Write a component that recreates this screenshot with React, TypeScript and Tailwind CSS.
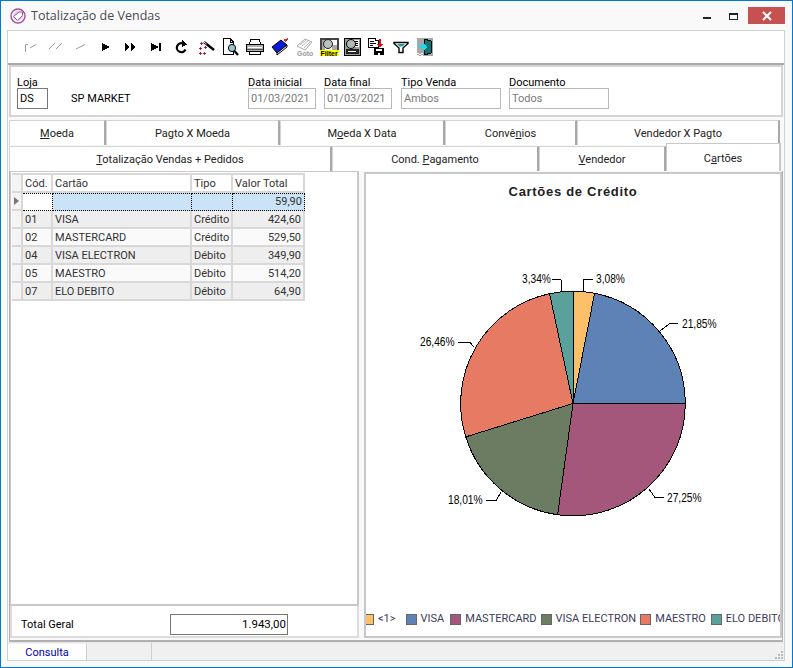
import React from "react";

const slices = [
  { v: 3.08, c: "#fdbf67" },
  { v: 21.85, c: "#5e82b6" },
  { v: 27.25, c: "#a5577b" },
  { v: 18.01, c: "#6c7c63" },
  { v: 26.46, c: "#e67a62" },
  { v: 3.34, c: "#5ba19b" },
];
const CX = 573, CY = 403.5, R = 112.3;
function slicePaths() {
  let a = 0;
  const total = slices.reduce((s, x) => s + x.v, 0);
  return slices.map((s) => {
    const a0 = a;
    a += (s.v / total) * Math.PI * 2;
    const x0 = CX + R * Math.sin(a0), y0 = CY - R * Math.cos(a0);
    const x1 = CX + R * Math.sin(a), y1 = CY - R * Math.cos(a);
    const large = a - a0 > Math.PI ? 1 : 0;
    return { d: `M${CX} ${CY}L${x0} ${y0}A${R} ${R} 0 ${large} 1 ${x1} ${y1}Z`, c: s.c };
  });
}

const labels = [
  { t: "3,08%", x: 596, y: 283, l: "593,279.5 584,279.5 583,291" },
  { t: "3,34%", x: 522, y: 283, l: "552,279.5 561,279.5 562,291" },
  { t: "21,85%", x: 682, y: 328, l: "678,323.5 670,323.5 660,331" },
  { t: "26,46%", x: 420, y: 346, l: "458,342.5 470,342.5 474,347" },
  { t: "18,01%", x: 448, y: 504, l: "486,500.5 496,500.5 501,492" },
  { t: "27,25%", x: 667, y: 502, l: "664,497.5 655,497.5 649,489" },
];

function Ic({ children, w = 16 }: { children: React.ReactNode; w?: number }) {
  return (
    <svg width={w} height={18} viewBox={`0 0 ${w} 18`} shapeRendering="crispEdges" className="block">
      {children}
    </svg>
  );
}

const G = "#9a9a9a";
const icons: React.ReactNode[] = [
  <Ic key="1"><path d="M2.5 14V6.5H5M7 10L13 6.5" stroke={G} fill="none" shapeRendering="auto" /></Ic>,
  <Ic key="2"><path d="M1 11L7 5M8 11L14 5" stroke={G} fill="none" shapeRendering="auto" /></Ic>,
  <Ic key="3"><path d="M3 11L12 6.5" stroke={G} fill="none" shapeRendering="auto" /></Ic>,
  <Ic key="4"><path d="M4 5L12 9L4 13Z" fill="#000" /></Ic>,
  <Ic key="5"><path d="M2 5L7 9L2 13ZM8 5L13 9L8 13Z" fill="#000" /></Ic>,
  <Ic key="6"><path d="M3 5L11 9L3 13ZM11 5H13V13H11Z" fill="#000" /></Ic>,
  <Ic key="7"><path d="M12.5 11.5A4.5 4.5 0 1 1 10 5.5" stroke="#000" strokeWidth="2.2" fill="none" shapeRendering="auto" /><path d="M9 2L14 6.5L9 9Z" fill="#000" /></Ic>,
  <Ic key="8" w={18}>
    <path d="M7 4L17 12" stroke="#000" strokeWidth="2.4" shapeRendering="auto" />
    <path d="M7 4L9.5 6" stroke="#fff" strokeWidth="1" shapeRendering="auto" />
    <path d="M4 4h1v3H4zM3 5h3v1H3zM8 8h1v3H8zM7 9h3v1H7zM3 9h1v3H3zM2 10h3v1H2zM7 14h1v3H7zM6 15h3v1H6zM3 14h1v3H3zM2 15h3v1H2z" fill="#d02030" />
    <path d="M4 5h1v1H4zM8 9h1v1H8zM3 10h1v1H3zM7 15h1v1H7zM3 15h1v1H3z" fill="#304090" />
  </Ic>,
  <Ic key="9" w={18}>
    <path d="M1.5 0.5H8L11.5 4V16.5H1.5Z" fill="#fff" stroke="#000" />
    <path d="M8 0.5V4H11.5" fill="none" stroke="#000" />
    <circle cx="10" cy="10" r="3.6" fill="#9cc4d4" stroke="#000" shapeRendering="auto" />
    <path d="M12.5 13L16 17" stroke="#000" strokeWidth="2.2" shapeRendering="auto" />
  </Ic>,
  <Ic key="10" w={18}>
    <path d="M4.5 1.5H13.5L14.5 6H3.5Z" fill="#fff" stroke="#000" />
    <path d="M0.5 8Q0.5 6 3 6H15Q17.5 6 17.5 8V13.5H0.5Z" fill="#b0b0b0" stroke="#000" />
    <path d="M2 9H16" stroke="#fff" />
    <path d="M1 11H17" stroke="#555" />
    <path d="M3.5 13.5H14.5V16.5H3.5Z" fill="#fff" stroke="#000" />
  </Ic>,
  <Ic key="11" w={18}>
    <path d="M1 9L10 2L16 7L6 15Z" fill="#0a18d8" stroke="#000" shapeRendering="auto" />
    <path d="M6 15L16 7V9L6 17Z" fill="#fff" stroke="#000" shapeRendering="auto" />
    <path d="M12 2L17 0V2L14 4Z" fill="#e02020" />
  </Ic>,
  <Ic key="12" w={18}>
    <path d="M1 8L9 1L16 4L9 12Z" fill="#fff" stroke="#a8a8a8" shapeRendering="auto" />
    <path d="M4 7L10 2M6 8L12 3M8 10L14 4" stroke="#b8b8b8" shapeRendering="auto" />
    <text x="1" y="17.5" fontSize="7" fontWeight="700" fill="#9a9a9a" fontFamily="'Liberation Sans',sans-serif">Goto</text>
  </Ic>,
  <Ic key="13" w={19}>
    <path d="M0 0H19V12H0Z" fill="#fff" />
    <path d="M0 0H19V2H0ZM0 0H2V12H0ZM17 0H19V12H17Z" fill="#444" />
    <path d="M2 2H5V12H2ZM12 7H17V12H12Z" fill="#aaa" />
    <circle cx="8" cy="6" r="4.5" fill="#b8c0c0" stroke="#222" shapeRendering="auto" />
    <path d="M0 12H19V18H0Z" fill="#ffff00" />
    <text x="0.5" y="17.5" fontSize="7" fontWeight="700" fill="#000" fontFamily="'Liberation Sans',sans-serif">Filter</text>
  </Ic>,
  <Ic key="14" w={17}>
    <path d="M0 0H17V18H0Z" fill="#000" />
    <path d="M1 1H16V17H1Z" fill="#9c9c9c" />
    <path d="M10 2H15V9H10Z" fill="#fff" />
    <path d="M11 3H14M11 5H14M11 7H14" stroke="#000" />
    <circle cx="7" cy="6" r="4.5" fill="#b0b8b8" stroke="#000" shapeRendering="auto" />
    <path d="M2 11H15V16H2Z" fill="#222" />
    <path d="M4 13H12V14H4Z" fill="#fff" />
  </Ic>,
  <Ic key="15" w={17}>
    <path d="M0.5 0.5H7.5V2.5H10.5V9.5H0.5Z" fill="#fff" stroke="#000" />
    <path d="M2 3H6M2 5H8M2 7H5" stroke="#000" />
    <path d="M11 1H13V6H15L12 10L9 6H11Z" fill="#e01010" />
    <path d="M6 10H16V17H6Z" fill="#000" />
    <path d="M8 11H14V13H8ZM10 15H12V17H10Z" fill="#fff" />
  </Ic>,
  <Ic key="16"><path d="M1 4.5H15V5.5L10 10V14.5H6V10L1 5.5Z" fill="#fff" stroke="#000" strokeWidth="1.4" shapeRendering="auto" /><path d="M4 6H12L9.5 8.5H6.5Z" fill="#1a9aa0" shapeRendering="auto" /></Ic>,
  <Ic key="17">
    <path d="M0 0H16V18H0Z" fill="#a8a8a8" />
    <path d="M7 1L14 3V15L7 17Z" fill="#0a7878" stroke="#000" />
    <path d="M2 7H6V4L10 9L6 13V10H2Z" fill="#20d8e8" />
    <path d="M0 15h2v1H0zM2 16h2v1H2zM4 15h2v1H4zM0 17h2v1H0zM4 17h2v1H4z" fill="#f0f0f0" />
  </Ic>,
];

function U({ a, u, b }: { a?: string; u: string; b?: string }) {
  return <span>{a}<span className="underline">{u}</span>{b}</span>;
}

function Tab({ w, children, active }: { w: number; children: React.ReactNode; active?: boolean }) {
  return (
    <div
      style={{ width: w }}
      className={
        active
          ? "h-[28px] -mt-[3px] pt-[4px] shrink-0 flex items-center justify-center bg-white border border-b-0 border-[#c8c8c8] border-r-2 relative"
          : "h-[25px] pt-[3px] shrink-0 flex items-center justify-center bg-white border-l border-t border-[#d4d4d4] border-r-2 border-r-[#a8a8a8]"
      }
    >
      {children}
    </div>
  );
}

function Field({ label, value, w, ml }: { label: string; value: string; w: string; ml: string }) {
  return (
    <div className={`flex flex-col ${ml}`}>
      <div className="h-[13px] leading-[15px] text-black whitespace-nowrap">{label}</div>
      <div className={`${w} h-[21px] border border-[#b8b8b8] bg-white text-[#7a7a7a] px-[2px] leading-[19px]`}>{value}</div>
    </div>
  );
}

const rows = [
  ["", "", "", "59,90"],
  ["01", "VISA", "Crédito", "424,60"],
  ["02", "MASTERCARD", "Crédito", "529,50"],
  ["04", "VISA ELECTRON", "Débito", "349,90"],
  ["05", "MAESTRO", "Débito", "514,20"],
  ["07", "ELO DEBITO", "Débito", "64,90"],
];
const legend = [
  ["<1>", "#fdbf67", "mr-[10px]"],
  ["VISA", "#5e82b6", "mr-[6px]"],
  ["MASTERCARD", "#a5577b", "mr-[4px]"],
  ["VISA ELECTRON", "#6c7c63", "mr-[4px]"],
  ["MAESTRO", "#e67a62", "mr-[5px]"],
  ["ELO DEBITO", "#5ba19b", "mr-0"],
];
const cell = "h-[18px] border-r-2 border-b-2 border-[#d8d8d8] px-[2px] overflow-hidden whitespace-nowrap leading-[17px]";
const selCell = "h-[18px] border-r border-y border-dotted border-black px-[2px] overflow-hidden whitespace-nowrap leading-[16px]";

export default function App() {
  return (
    <div className="w-[793px] h-[668px] border border-[#0078d7] bg-[#f9f9f9] flex flex-col overflow-hidden text-[11px] text-[#222] font-['Roboto',sans-serif]">
      <div className="h-[29px] shrink-0 flex items-start">
        <svg width="16" height="16" viewBox="0 0 16 16" className="ml-[9px] mt-[7px] shrink-0">
          <circle cx="8" cy="8" r="7" fill="none" stroke="#a0509a" strokeWidth="1.4" />
          <circle cx="8" cy="8" r="5" fill="#e8d0e8" />
          <path d="M3.5 8.5L9 4H12.5V7.5L7.5 12.5Z" fill="#fff" stroke="#a0509a" />
        </svg>
        <div className="ml-[5px] mt-[6px] text-[12.5px] leading-[18px] text-[#4a4a55] font-['Open_Sans',sans-serif]">Totalização de Vendas</div>
        <div className="ml-auto flex items-start">
          <div className="w-[8px] h-[2px] bg-[#222] mt-[16px] mr-[18px]" />
          <div className="w-[9px] h-[7px] border border-t-2 border-[#222] mt-[12px] mr-[10px]" />
          <div className="w-[37px] h-[17px] mt-[6px] mr-[7px] bg-[#c75050] flex items-center justify-center">
            <svg width="10" height="10" viewBox="0 0 10 10"><path d="M1 1L9 9M9 1L1 9" stroke="#fff" strokeWidth="2" /></svg>
          </div>
        </div>
      </div>

      <div className="ml-[6px] mr-[7px] h-[631px] shrink-0 border border-[#d0d0d0] flex flex-col">
        <div className="h-[34px] shrink-0 bg-white border-b-2 border-[#a8a8a8] flex items-center pl-[11px]">
          {icons.map((ic, i) => (
            <div key={i} className={`${i < 12 ? "w-[24.9px]" : i === 12 ? "w-[23px]" : "w-[24px]"} shrink-0 flex justify-center`}>{ic}</div>
          ))}
        </div>

        <div className="mx-[1px] h-[52px] shrink-0 border-2 border-[#d4d4d4] bg-white flex items-start pt-[8px] pl-[6px]">
          <div className="flex flex-col">
            <div className="h-[13px] leading-[15px] text-black">Loja</div>
            <div className="w-[31px] h-[21px] border border-[#777] px-[2px] leading-[19px] text-black">DS</div>
          </div>
          <div className="ml-[23px] mt-[17px] text-black leading-[14px] w-[177px] whitespace-nowrap">SP MARKET</div>
          <Field label="Data inicial" value="01/03/2021" w="w-[68px]" ml="ml-0" />
          <Field label="Data final" value="01/03/2021" w="w-[68px]" ml="ml-[8px]" />
          <Field label="Tipo Venda" value="Ambos" w="w-[100px]" ml="ml-[9px]" />
          <Field label="Documento" value="Todos" w="w-[100px]" ml="ml-[8px]" />
        </div>

        <div className="flex pl-[1px] mt-[3px] shrink-0">
          <Tab w={97}><U u="M" b="oeda" /></Tab>
          <Tab w={174}>Pagto X Moeda</Tab>
          <Tab w={165}><U a="M" u="o" b="eda X Data" /></Tab>
          <Tab w={132}><U a="Convê" u="n" b="ios" /></Tab>
          <Tab w={203}>Vendedor X Pagto</Tab>
        </div>
        <div className="flex pl-[1px] mt-[1px] shrink-0 items-end">
          <Tab w={323}><U u="T" b="otalização Vendas + Pedidos" /></Tab>
          <Tab w={207}><span>Cond. <U u="P" b="agamento" /></span></Tab>
          <Tab w={127}><U u="V" b="endedor" /></Tab>
          <Tab w={115} active><U a="C" u="a" b="rtões" /></Tab>
        </div>

        <div className="mx-[1px] h-[471px] shrink-0 border-b-2 border-x border-[#b0b0b0] flex bg-[#f9f9f9]">
          <div className="w-[349px] shrink-0 flex flex-col">
            <div className="h-[435px] shrink-0 bg-white border-r-2 border-b-2 border-l border-t border-[#c8c8c8] pt-[1px] pl-[1px]">
              <div className="grid grid-cols-[11px_30px_139px_41px_72px] w-fit border-t-2 border-[#d8d8d8] text-[#333]">
                <div className={`${cell} bg-[#f4f4f4]`} />
                <div className={cell}>Cód.</div>
                <div className={cell}>Cartão</div>
                <div className={cell}>Tipo</div>
                <div className={cell}>Valor Total</div>
                {rows.map((r, i) => {
                  const sel = i === 0;
                  const bg = sel ? "bg-[#cae3f6]" : i % 2 === 1 ? "bg-[#eeeeee]" : "bg-[#fafafa]";
                  const c = sel ? selCell : cell;
                  return (
                    <React.Fragment key={i}>
                      <div className={`${cell} bg-[#f4f4f4] flex items-center justify-center`}>
                        {sel && <svg width="5" height="8" viewBox="0 0 5 8"><path d="M0 0L5 4L0 8Z" fill="#777" /></svg>}
                      </div>
                      <div className={`${c} ${sel ? "bg-white" : bg}`}>{r[0]}</div>
                      <div className={`${c} ${bg}`}>{r[1]}</div>
                      <div className={`${c} ${bg}`}>{r[2]}</div>
                      <div className={`${c} ${bg} text-right`}>{r[3]}</div>
                    </React.Fragment>
                  );
                })}
              </div>
            </div>
            <div className="h-[32px] shrink-0 border-2 border-t-0 border-[#dcdcdc] bg-white flex items-start pt-[8px] pl-[9px]">
              <div className="w-[149px] text-black leading-[21px]">Total Geral</div>
              <div className="w-[118px] h-[21px] border border-[#777] text-right pr-[1px] leading-[19px] text-black text-[11.5px]">1.943,00</div>
            </div>
          </div>

          <div className="w-[418px] ml-[5px] mt-[1px] h-[466px] shrink-0 border-2 border-[#c8c8c8] bg-white flex flex-col overflow-hidden">
            <div className="h-[39px] shrink-0 text-center font-bold text-[13px] tracking-[0.7px] text-[#222] pt-[10px] leading-[16px] font-['Liberation_Sans',sans-serif]">Cartões de Crédito</div>
            <svg width="414" height="393" viewBox="366 213 414 393" className="block shrink-0">
              {slicePaths().map((s, i) => (
                <path key={i} d={s.d} fill={s.c} stroke="#000" strokeWidth="1" shapeRendering="crispEdges" />
              ))}
              {labels.map((l) => (
                <g key={l.t}>
                  <polyline points={l.l} fill="none" stroke="#000" shapeRendering="crispEdges" />
                  <text transform={`translate(${l.x} ${l.y}) scale(0.85 1)`} fontSize="12" fill="#000" fontFamily="'Liberation Sans',sans-serif">{l.t}</text>
                </g>
              ))}
            </svg>
            <div className="flex items-center h-[18px] mt-[4px] -ml-[3px] text-[#3c3c5a] whitespace-nowrap overflow-hidden">
              {legend.map(([t, c, m]) => (
                <div key={t} className={`flex items-center shrink-0 ${m}`}>
                  <div className="w-[11px] h-[11px] border border-[#666] mr-[4px]" style={{ background: c }} />
                  {t}
                </div>
              ))}
            </div>
          </div>
        </div>

        <div className="flex-1 flex bg-[#f0f0f0] relative border-t border-[#e8e8e8]">
          <div className="w-[79px] h-[16px] mt-[1px] bg-white text-center text-[#0000b0] leading-[18px] border-r border-[#d0d0d0]">Consulta</div>
          <div className="w-[65px] border-r border-[#d0d0d0]" />
          <svg width="10" height="10" viewBox="0 0 10 10" className="absolute right-0 bottom-0" shapeRendering="crispEdges">
            <path d="M7 1h2v2H7zM4 4h2v2H4zM7 4h2v2H7zM1 7h2v2H1zM4 7h2v2H4zM7 7h2v2H7z" fill="#bbb" />
          </svg>
        </div>
      </div>
    </div>
  );
}
